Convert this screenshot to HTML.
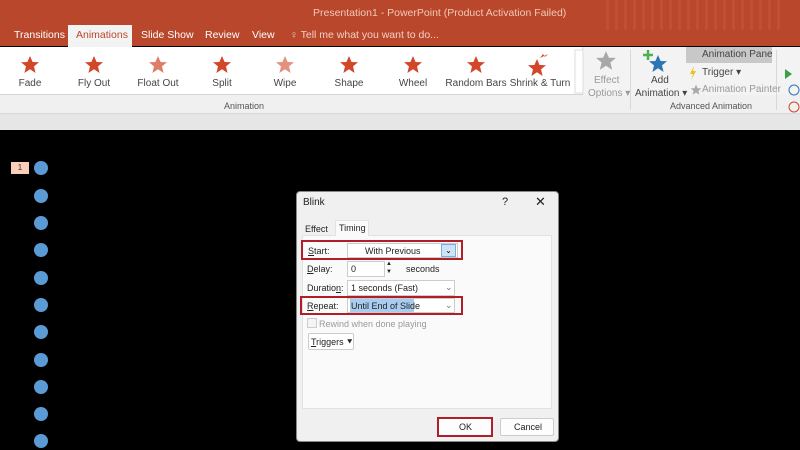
<!DOCTYPE html>
<html><head><meta charset="utf-8"><style>
*{margin:0;padding:0;box-sizing:border-box}
body{width:800px;height:450px;overflow:hidden;background:#000;font-family:"Liberation Sans",sans-serif;position:relative}
.a{position:absolute}
.t{position:absolute;font-size:10.5px;color:#444;white-space:nowrap}
.lbl{position:absolute;top:78px;font-size:10px;color:#444;white-space:nowrap;transform:translateX(-50%)}
.dot{position:absolute;left:34px;width:14px;height:14px;border-radius:50%;background:#5b9bd5}
.dl{position:absolute;font-size:9px;color:#222;white-space:nowrap}
.u{text-decoration:underline}
</style></head><body>
<div class="a" style="left:0;top:0;width:800px;height:46px;background:#b9472b"></div>
<div class="a" style="left:600px;top:0;width:180px;height:30px;background:repeating-linear-gradient(90deg,#b9472b 0 6px,#c4553a 6px 9px);opacity:.6"></div>
<div class="t" style="left:313px;top:7px;color:#f4c8b8;font-size:10.5px">Presentation1 - PowerPoint (Product Activation Failed)</div>
<div class="a" style="left:68px;top:25px;width:64px;height:22px;background:#f3f3f3"></div>
<div class="t" style="left:14px;top:29px;color:#fff">Transitions</div>
<div class="t" style="left:76px;top:29px;color:#b9472b">Animations</div>
<div class="t" style="left:141px;top:29px;color:#fff">Slide Show</div>
<div class="t" style="left:205px;top:29px;color:#fff">Review</div>
<div class="t" style="left:252px;top:29px;color:#fff">View</div>
<div class="t" style="left:290px;top:29px;color:#f4d0c4">♀ Tell me what you want to do...</div>
<div class="a" style="left:0;top:47px;width:800px;height:48px;background:#f3f3f3"></div>
<div class="a" style="left:0;top:47px;width:583px;height:48px;background:#fff;border-right:1px solid #d4d4d4;border-bottom:1px solid #d4d4d4"></div>
<div class="a" style="left:0;top:95px;width:800px;height:18px;background:#f0f0f0"></div>
<div class="a" style="left:0;top:113px;width:800px;height:17px;background:#e6e6e6;border-top:1px solid #d8d8d8"></div>
<div class="t" style="left:224px;top:101px;font-size:9px;color:#555">Animation</div>
<div class="t" style="left:670px;top:101px;font-size:9px;color:#555">Advanced Animation</div>
<div class="a" style="left:630px;top:50px;width:1px;height:60px;background:#d8d8d8"></div>
<div class="a" style="left:776px;top:50px;width:1px;height:60px;background:#d8d8d8"></div>
<svg class="a" style="left:0;top:0" width="800" height="130">
<defs><path id="s" d="M0,-9 L2.6,-3 9,-2.8 4,1.4 5.6,8 0,4.3 -5.6,8 -4,1.4 -9,-2.8 -2.6,-3Z"/></defs>
<g fill="#d2462a">
<use href="#s" x="30" y="65"/><use href="#s" x="94" y="65"/><use href="#s" x="158" y="65" fill-opacity=".7"/>
<use href="#s" x="222" y="65"/><use href="#s" x="285" y="65" fill-opacity=".6"/><use href="#s" x="349" y="65"/>
<use href="#s" x="413" y="65"/><use href="#s" x="476" y="65"/><use href="#s" x="537" y="68"/>
<path d="M540,58 l3,-4 2,3 3,-3z"/>
</g>
<use href="#s" x="606" y="61" fill="#a8a8a8" transform="translate(-60.6,-6.1) scale(1.1)"/>
<use href="#s" x="658" y="64" fill="#2e75b6"/>
<path d="M648,50v10M643,55h10" stroke="#4caf50" stroke-width="2.5"/>
<rect x="686" y="47" width="86" height="16" fill="#c8c8c8"/>
<path d="M694,66l-4,8h3l-2,6 5,-9h-3z" fill="#f0c020"/>
<use href="#s" x="0" y="0" fill="#aaa" transform="translate(696,90) scale(.6)"/>
<path d="M785,69l7,5-7,5z" fill="#3aa04a"/>
<circle cx="794" cy="90" r="5" fill="none" stroke="#2e75b6"/><circle cx="794" cy="107" r="5" fill="none" stroke="#d2462a"/>
<rect x="575" y="50" width="8" height="43" fill="#fff" stroke="#ddd"/>
</svg>
<div class="lbl" style="left:30px">Fade</div><div class="lbl" style="left:94px">Fly Out</div>
<div class="lbl" style="left:158px">Float Out</div><div class="lbl" style="left:222px">Split</div>
<div class="lbl" style="left:285px">Wipe</div><div class="lbl" style="left:349px">Shape</div>
<div class="lbl" style="left:413px">Wheel</div><div class="lbl" style="left:476px">Random Bars</div>
<div class="lbl" style="left:540px">Shrink &amp; Turn</div>
<div class="t" style="left:594px;top:75px;color:#999;font-size:10px">Effect</div>
<div class="t" style="left:588px;top:88px;color:#999;font-size:10px">Options ▾</div>
<div class="t" style="left:651px;top:75px;font-size:10px">Add</div>
<div class="t" style="left:635px;top:88px;font-size:10px">Animation ▾</div>
<div class="t" style="left:702px;top:49px;font-size:10px">Animation Pane</div>
<div class="t" style="left:702px;top:67px;font-size:10px">Trigger ▾</div>
<div class="t" style="left:702px;top:84px;font-size:10px;color:#999">Animation Painter</div>

<div class="a" style="left:11px;top:162px;width:18px;height:12px;background:#fbcfb8;font-size:8px;text-align:center;line-height:12px;color:#333">1</div>
<div class="dot" style="top:161px"></div><div class="dot" style="top:189px"></div><div class="dot" style="top:216px"></div>
<div class="dot" style="top:243px"></div><div class="dot" style="top:271px"></div><div class="dot" style="top:298px"></div>
<div class="dot" style="top:325px"></div><div class="dot" style="top:353px"></div><div class="dot" style="top:380px"></div>
<div class="dot" style="top:407px"></div><div class="dot" style="top:434px"></div>

<div class="a" style="left:296px;top:191px;width:263px;height:251px;background:#f0f0f0;border:1px solid #888;border-radius:4px"></div>
<div class="dl" style="left:303px;top:197px;font-size:10px">Blink</div>
<div class="dl" style="left:502px;top:196px;font-size:11px">?</div>
<div class="dl" style="left:535px;top:194px;font-size:13px">✕</div>
<div class="a" style="left:302px;top:235px;width:250px;height:174px;background:#fafafa;border:1px solid #e2e2e2"></div>
<div class="a" style="left:335px;top:220px;width:34px;height:16px;background:#fafafa;border:1px solid #e2e2e2;border-bottom:none"></div>
<div class="dl" style="left:305px;top:224px">Effect</div>
<div class="dl" style="left:339px;top:223px">Timing</div>
<div class="a" style="left:301px;top:240px;width:162px;height:20px;border:2px solid #b01e2a"></div>
<div class="dl" style="left:308px;top:246px"><span class="u">S</span>tart:</div>
<div class="a" style="left:347px;top:243px;width:111px;height:15px;background:#fff;border:1px solid #ccc"></div>
<div class="dl" style="left:365px;top:246px">With Previous</div>
<div class="a" style="left:441px;top:244px;width:15px;height:13px;background:#cfe3f7;border:1px solid #7aaede;font-size:8px;text-align:center;line-height:11px">⌄</div>
<div class="dl" style="left:307px;top:264px"><span class="u">D</span>elay:</div>
<div class="a" style="left:347px;top:261px;width:38px;height:16px;background:#fff;border:1px solid #ccc"></div>
<div class="dl" style="left:351px;top:264px">0</div>
<div class="dl" style="left:386px;top:260px;font-size:6px;line-height:8px">▲<br>▼</div>
<div class="dl" style="left:406px;top:264px">seconds</div>
<div class="dl" style="left:307px;top:283px">Duratio<span class="u">n</span>:</div>
<div class="a" style="left:347px;top:280px;width:108px;height:16px;background:#fff;border:1px solid #ccc"></div>
<div class="dl" style="left:351px;top:283px">1 seconds (Fast)</div>
<div class="dl" style="left:445px;top:282px;color:#777">⌄</div>
<div class="a" style="left:300px;top:296px;width:163px;height:19px;border:2px solid #b01e2a"></div>
<div class="dl" style="left:307px;top:301px"><span class="u">R</span>epeat:</div>
<div class="a" style="left:347px;top:298px;width:108px;height:15px;background:#fff;border:1px solid #ccc"></div>
<div class="a" style="left:350px;top:299px;width:64px;height:13px;background:#a9cdf0"></div>
<div class="dl" style="left:351px;top:301px">Until End of Slide</div>
<div class="dl" style="left:445px;top:300px;color:#777">⌄</div>
<div class="a" style="left:307px;top:318px;width:10px;height:10px;border:1px solid #ccc;background:#f4f4f4"></div>
<div class="dl" style="left:319px;top:319px;color:#999">Rewind when done playing</div>
<div class="a" style="left:308px;top:333px;width:46px;height:17px;background:#fff;border:1px solid #ccc;border-radius:2px"></div>
<div class="dl" style="left:311px;top:337px"><span class="u">T</span>riggers ⯆</div>
<div class="a" style="left:437px;top:417px;width:56px;height:20px;border:2px solid #b01e2a;background:#fdfdfd"></div>
<div class="dl" style="left:459px;top:422px">OK</div>
<div class="a" style="left:500px;top:418px;width:54px;height:18px;border:1px solid #ccc;background:#fdfdfd;border-radius:2px"></div>
<div class="dl" style="left:514px;top:422px">Cancel</div>
</body></html>
